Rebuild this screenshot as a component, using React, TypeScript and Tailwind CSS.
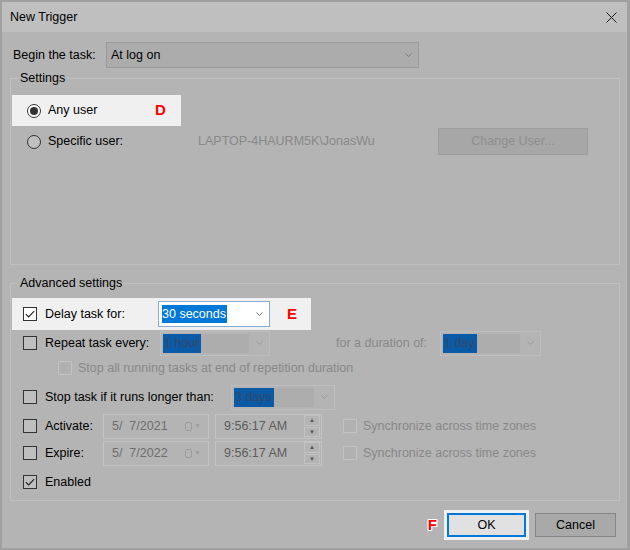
import React from "react";

function Chevron({ color = "#777" }: { color?: string }) {
  return (
    <svg width="7" height="4" viewBox="0 0 7 4">
      <path d="M0.5 0.5 L3.5 3.5 L6.5 0.5" fill="none" stroke={color} strokeWidth="1" />
    </svg>
  );
}

function CheckBox({ checked = false, disabled = false, bg = "bg-[#bfbfbf]" }: { checked?: boolean; disabled?: boolean; bg?: string }) {
  return (
    <span
      className={`flex h-[14px] w-[14px] shrink-0 items-center justify-center border ${
        disabled ? "border-[#c3c3c3] bg-[#b1b1b1]" : `border-[#333333] ${bg}`
      }`}
    >
      {checked && (
        <svg width="12" height="12" viewBox="0 0 12 12">
          <path d="M1.8 6.2 L4.6 9 L10.2 3.2" fill="none" stroke="#1e1e1e" strokeWidth="1.1" />
        </svg>
      )}
    </span>
  );
}

function Radio({ checked = false, bg = "bg-[#bfbfbf]" }: { checked?: boolean; bg?: string }) {
  return (
    <span className={`flex h-[14px] w-[14px] shrink-0 items-center justify-center rounded-full border border-[#333333] ${bg}`}>
      {checked && <span className="h-[8px] w-[8px] rounded-full bg-[#333333]" />}
    </span>
  );
}

// greyed out combo box with a selected (blue) value
function DisabledCombo({ w, text }: { w: string; text: string }) {
  return (
    <div className={`flex h-[25px] shrink-0 items-center border border-[#bebebe] bg-[#b4b4b4] ${w}`}>
      <div className="ml-[2px] flex h-[19px] flex-1 items-center bg-[#adadad]">
        <span className="flex h-full items-center bg-[#0b5aa5] pr-[2px] pl-[1px] text-[#30496a]">{text}</span>
      </div>
      <div className="flex w-[20px] justify-center">
        <Chevron color="#9a9a9a" />
      </div>
    </div>
  );
}

function DateBox({ value }: { value: string }) {
  return (
    <div className="flex h-[25px] w-[106px] shrink-0 items-center border border-[#c4c4c4] pl-[8px] text-[#6e6e6e]">
      <span className="w-[73px] whitespace-pre">{value}</span>
      <span className="h-[9px] w-[7px] rounded-[2px] border border-[#9c9c9c]" />
      <span className="ml-[2px] text-[7px] text-[#9c9c9c]">▼</span>
    </div>
  );
}

function TimeBox({ value }: { value: string }) {
  return (
    <div className="flex h-[25px] w-[107px] shrink-0 items-center border border-[#c4c4c4] pl-[8px] text-[#5c5c5c]">
      <span className="w-[80px]">{value}</span>
      <div className="flex h-[22px] w-[16px] flex-col gap-[1px]">
        <div className="flex flex-1 items-center justify-center border border-[#c2c2c2] text-[6px] leading-none text-[#555]">▲</div>
        <div className="flex flex-1 items-center justify-center border border-[#c2c2c2] text-[6px] leading-none text-[#555]">▼</div>
      </div>
    </div>
  );
}

export default function App() {
  return (
    <div className="flex h-[550px] w-[630px] flex-col border-2 border-r-[3px] border-[#a0a0a0] bg-[#b4b4b4] font-['Liberation_Sans',Arial,sans-serif] text-[12.5px] text-black">
      {/* title bar */}
      <div className="flex h-[30px] shrink-0 items-center justify-between bg-[#bfbfbf] pr-[10px] pl-[8px]">
        <span>New Trigger</span>
        <svg width="11" height="11" viewBox="0 0 11 11">
          <path d="M0.5 0.5 L10.5 10.5 M10.5 0.5 L0.5 10.5" stroke="#1a1a1a" strokeWidth="1" />
        </svg>
      </div>

      <div className="flex flex-col px-[8px]">
        {/* begin the task */}
        <div className="mt-[10px] flex h-[26px] items-center">
          <span className="ml-[3px] w-[93px]">Begin the task:</span>
          <div className="flex h-[26px] w-[313px] items-center justify-between border border-[#9b9b9b] bg-[#acacac] pr-[6px] pl-[4px]">
            <span>At log on</span>
            <Chevron color="#7a7a7a" />
          </div>
        </div>

        {/* settings */}
        <fieldset className="mt-[2px] h-[195px] w-[610px] border border-[#c0c0c0]">
          <legend className="ml-[7px] px-[2px] leading-[16px]">Settings</legend>
          <div className="mt-[9px] ml-[1px] flex h-[31px] w-[169px] items-center bg-[#f0f0f0] pl-[15px]">
            <Radio checked bg="bg-white" />
            <span className="ml-[7px] w-[107px]">Any user</span>
            <span className="text-[15px] font-bold text-[#ff0000]">D</span>
          </div>
          <div className="mt-[2px] flex h-[27px] items-center pl-[16px]">
            <Radio />
            <span className="ml-[7px] w-[150px]">Specific user:</span>
            <span className="w-[240px] text-[#888888]">LAPTOP-4HAURM5K\JonasWu</span>
            <div className="flex h-[27px] w-[150px] items-center justify-center border border-[#9e9e9e] bg-[#a7a7a7] text-[#8e8e8e]">
              Change User...
            </div>
          </div>
        </fieldset>

        {/* advanced settings */}
        <fieldset className="mt-[10px] h-[226px] w-[610px] border border-[#c0c0c0]">
          <legend className="ml-[7px] px-[2px] leading-[16px]">Advanced settings</legend>

          <div className="mt-[7px] ml-[1px] flex h-[32px] w-[299px] items-center bg-[#f0f0f0] pl-[11px]">
            <CheckBox checked bg="bg-white" />
            <span className="ml-[8px] w-[113px]">Delay task for:</span>
            <div className="flex h-[26px] w-[112px] items-center border border-[#86aad6] bg-white pr-[6px] pl-[3px]">
              <span className="bg-[#0078d7] pr-[1px] text-white">30 seconds</span>
              <span className="flex-1" />
              <Chevron color="#777" />
            </div>
            <span className="ml-[17px] text-[15px] font-bold text-[#ff0000]">E</span>
          </div>

          <div className="flex h-[26px] items-center pl-[12px]">
            <CheckBox />
            <span className="ml-[8px] w-[115px]">Repeat task every:</span>
            <DisabledCombo w="w-[110px]" text="1 hour" />
            <span className="ml-[66px] w-[104px] text-[#888888]">for a duration of:</span>
            <DisabledCombo w="w-[101px]" text="1 day" />
          </div>

          <div className="flex h-[24px] items-center pl-[47px]">
            <CheckBox disabled />
            <span className="ml-[6px] text-[#888888]">Stop all running tasks at end of repetition duration</span>
          </div>

          <div className="mt-[4px] flex h-[26px] items-center pl-[12px]">
            <CheckBox />
            <span className="ml-[8px] w-[186px]">Stop task if it runs longer than:</span>
            <DisabledCombo w="w-[104px]" text="3 days" />
          </div>

          <div className="mt-[3px] flex h-[26px] items-center pl-[12px]">
            <CheckBox />
            <span className="ml-[8px] w-[58px]">Activate:</span>
            <DateBox value={"5/  7/2021"} />
            <div className="ml-[6px]">
              <TimeBox value="9:56:17 AM" />
            </div>
            <div className="ml-[21px]">
              <CheckBox disabled />
            </div>
            <span className="ml-[6px] text-[#888888]">Synchronize across time zones</span>
          </div>

          <div className="mt-[1px] flex h-[26px] items-center pl-[12px]">
            <CheckBox />
            <span className="ml-[8px] w-[58px]">Expire:</span>
            <DateBox value={"5/  7/2022"} />
            <div className="ml-[6px]">
              <TimeBox value="9:56:17 AM" />
            </div>
            <div className="ml-[21px]">
              <CheckBox disabled />
            </div>
            <span className="ml-[6px] text-[#888888]">Synchronize across time zones</span>
          </div>

          <div className="mt-[4px] flex h-[24px] items-center pl-[12px]">
            <CheckBox checked />
            <span className="ml-[8px]">Enabled</span>
          </div>
        </fieldset>

        {/* buttons */}
        <div className="mt-[9px] mr-[3px] flex items-center justify-end">
          <span className="text-[15px] font-bold text-[#ff0000] [text-shadow:1px_1px_0_#fff,-1px_-1px_0_#fff,1px_-1px_0_#fff,-1px_1px_0_#fff,1px_0_0_#fff,-1px_0_0_#fff,0_1px_0_#fff,0_-1px_0_#fff]">
            F
          </span>
          <div className="ml-[7px] flex h-[30px] w-[85px] items-center justify-center bg-[#f0f0f0]">
            <div className="flex h-[24px] w-[79px] items-center justify-center border-2 border-[#0078d7] bg-[#e1e1e1]">
              OK
            </div>
          </div>
          <div className="ml-[6px] flex h-[24px] w-[81px] items-center justify-center border border-[#868686] bg-[#a9a9a9]">
            Cancel
          </div>
        </div>
      </div>
    </div>
  );
}
